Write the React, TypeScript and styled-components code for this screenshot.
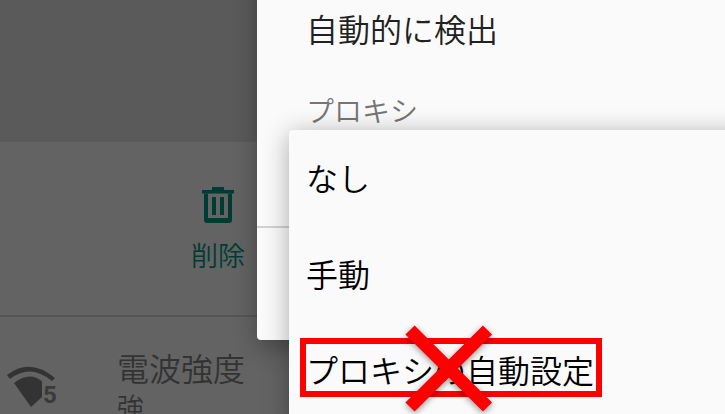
import styled, { createGlobalStyle } from "styled-components"

const GlobalStyle = createGlobalStyle`
  html, body {
    margin: 0;
    padding: 0;
    background: #636363;
  }
  body {
    font-family: "Noto Sans CJK JP", "Roboto", sans-serif;
    font-weight: 350;
  }
`

export default function App() {
  return (
    <Screen>
      <GlobalStyle />
      <Background>
        <TopBand />
        <ActionRow>
          <DeleteAction>
            <svg width="34" height="38" viewBox="0 0 34 38" fill="#003c34">
              <path d="M11 1h12v3H33v3.500H1V4H11z" />
              <path
                d="M3 7.500h28V34a3 3 0 0 1-3 3H6a3 3 0 0 1-3-3zM7 7.500V32h20V7.500z"
                fillRule="evenodd"
              />
              <rect x="11" y="11" width="4" height="18" />
              <rect x="19" y="11" width="4" height="18" />
            </svg>
            <DeleteLabel>削除</DeleteLabel>
          </DeleteAction>
        </ActionRow>
        <SignalRow>
          <svg width="52" height="42" viewBox="0 0 52 42">
            <path d="M1 9Q24 -9 49 12L46 15Q24 -3 4 13z" fill="#333" />
            <path d="M8 17Q24 5 36 15.500V31L25 41z" fill="#333" />
            <text x="37" y="37" fontSize="24" fontWeight="700" fill="#3a3a3a" fontFamily="Roboto, sans-serif">5</text>
          </svg>
          <SignalText>
            <SignalTitle>電波強度</SignalTitle>
            <SignalValue>強</SignalValue>
          </SignalText>
        </SignalRow>
      </Background>

      <Dialog>
        <DetectValue>自動的に検出</DetectValue>
        <ProxyLabel>プロキシ</ProxyLabel>
        <DialogDivider />
      </Dialog>

      <Menu>
        <MenuItem>なし</MenuItem>
        <MenuItem>手動</MenuItem>
        <MenuItem>プロキシの自動設定</MenuItem>
      </Menu>

      <Highlight />
      <CrossMark width="100" height="90" viewBox="0 0 100 90">
        <path d="M12 5L89.500 82M89.500 5L12 82" stroke="#ff0000" strokeWidth="13" fill="none" />
      </CrossMark>
    </Screen>
  )
}

//styled components
const Screen = styled.div`
  position: relative;
  width: 725px;
  height: 414px;
  overflow: hidden;
  background: #636363;
`

const Background = styled.div`
  display: flex;
  flex-direction: column;
  width: 257px;
  height: 414px;
`

const TopBand = styled.div`
  height: 142px;
  flex: none;
  background: #5a5a5a;
`

const ActionRow = styled.div`
  height: 175px;
  flex: none;
  display: flex;
  justify-content: flex-end;
  padding: 44px 12px 0 0;
  box-sizing: border-box;
  border-bottom: 2px solid #565656;
`

const DeleteAction = styled.div`
  display: flex;
  flex-direction: column;
  align-items: center;
  gap: 13px;
`

const DeleteLabel = styled.span`
  font-size: 27px;
  line-height: 36px;
  color: #003c34;
`

const SignalRow = styled.div`
  display: flex;
  align-items: flex-start;
  gap: 59px;
  padding: 49px 0 0 6px;
`

const SignalText = styled.div`
  display: flex;
  flex-direction: column;
  margin-top: -21px;
`

const SignalTitle = styled.span`
  font-size: 32px;
  line-height: 44px;
  color: #333;
  white-space: nowrap;
`

const SignalValue = styled.span`
  font-size: 27px;
  line-height: 36px;
  color: #333;
`

const Dialog = styled.div`
  position: absolute;
  left: 257px;
  top: -40px;
  width: 520px;
  height: 380px;
  box-sizing: border-box;
  padding: 44px 0 0 49px;
  background: #fafafa;
  border-radius: 4px;
  box-shadow: 0 8px 24px rgba(0, 0, 0, 0.3);
`

const DetectValue = styled.div`
  font-size: 32px;
  line-height: 48px;
  color: #212121;
`

const ProxyLabel = styled.div`
  margin-top: 40px;
  font-size: 28px;
  line-height: 36px;
  color: #757575;
`

const DialogDivider = styled.div`
  position: absolute;
  left: 0;
  right: 0;
  top: 266px;
  height: 2px;
  background: #d2d2d2;
`

const Menu = styled.div`
  position: absolute;
  left: 289px;
  top: 130px;
  width: 470px;
  height: 300px;
  box-sizing: border-box;
  padding: 0 0 0 17px;
  display: flex;
  flex-direction: column;
  background: #fafafa;
  border-radius: 4px;
  box-shadow: 0 4px 26px rgba(0, 0, 0, 0.32);
`

const MenuItem = styled.div`
  height: 96px;
  box-sizing: border-box;
  padding-bottom: 3px;
  display: flex;
  align-items: center;
  font-size: 32px;
  color: #000;
  white-space: nowrap;
`

const Highlight = styled.div`
  position: absolute;
  left: 300px;
  top: 338px;
  width: 302px;
  height: 59px;
  box-sizing: border-box;
  border: 6px solid #ff0000;
`

const CrossMark = styled.svg`
  position: absolute;
  left: 398px;
  top: 325px;
  filter: drop-shadow(0 2px 3px rgba(0, 0, 0, 0.4));
`
